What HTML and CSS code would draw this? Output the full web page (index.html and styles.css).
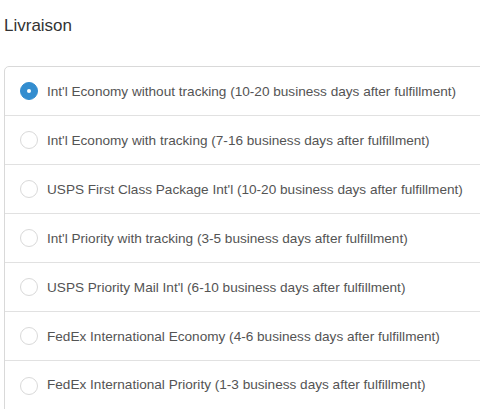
FILE: index.html
```html
<!DOCTYPE html>
<html>
<head>
<meta charset="utf-8">
<link rel="stylesheet" href="styles.css">
</head>
<body>
<h2 class="title">Livraison</h2>
<div class="frame">
<div class="options">
  <label class="row"><span class="radio checked"></span><span class="label">Int'l Economy without tracking (10-20 business days after fulfillment)</span></label>
  <label class="row"><span class="radio"></span><span class="label">Int'l Economy with tracking (7-16 business days after fulfillment)</span></label>
  <label class="row"><span class="radio"></span><span class="label">USPS First Class Package Int'l (10-20 business days after fulfillment)</span></label>
  <label class="row"><span class="radio"></span><span class="label">Int'l Priority with tracking (3-5 business days after fulfillment)</span></label>
  <label class="row"><span class="radio"></span><span class="label">USPS Priority Mail Int'l (6-10 business days after fulfillment)</span></label>
  <label class="row"><span class="radio"></span><span class="label">FedEx International Economy (4-6 business days after fulfillment)</span></label>
  <label class="row"><span class="radio"></span><span class="label">FedEx International Priority (1-3 business days after fulfillment)</span></label>
</div>
</div>
</body>
</html>
```
FILE: styles.css
```css
html, body {
  margin: 0;
  padding: 0;
  background: #fff;
}
body {
  font-family: "Liberation Sans", Arial, sans-serif;
  width: 480px;
  height: 410px;
  overflow: hidden;
}
.title {
  margin: 0;
  padding: 16px 0 0 4px;
  font-size: 17px;
  line-height: 20px;
  font-weight: normal;
  color: #333;
}
.frame {
  margin-top: 30px;
  padding-left: 4px;
  overflow: hidden;
}
.options {
  margin-right: -12px;
  margin-bottom: -12px;
  border: 1px solid #d9d9d9;
  border-radius: 5px;
}
.row {
  display: flex;
  align-items: center;
  height: 48px;
  padding-left: 15px;
  gap: 9px;
  border-top: 1px solid #e1e1e1;
  font-size: 13.6px;
  color: #545454;
  white-space: nowrap;
}
.row:first-child {
  border-top: none;
}
.row:last-child {
  height: 60px;
  align-items: flex-start;
  padding-top: 16px;
  box-sizing: border-box;
}
.radio {
  width: 16px;
  height: 16px;
  border: 1px solid #d9d9d9;
  border-radius: 50%;
  background: #fff;
  flex: none;
  position: relative;
}
.radio.checked {
  background: #338dcf;
  border-color: #338dcf;
}
.radio.checked::after {
  content: "";
  position: absolute;
  width: 4px;
  height: 4px;
  border-radius: 50%;
  background: #fff;
  left: 6px;
  top: 6px;
}
```
